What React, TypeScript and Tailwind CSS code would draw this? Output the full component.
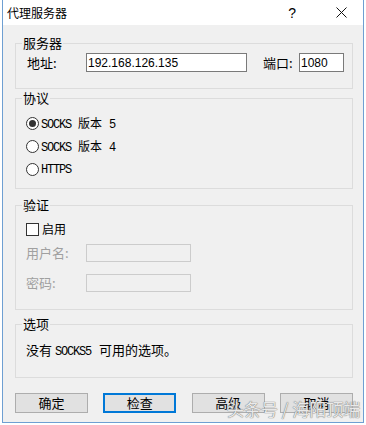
const cjk = "font-['Noto_Sans_CJK_SC','Noto_Sans',sans-serif]";
const mono = "font-['Liberation_Mono',monospace] text-[12px] tracking-[-1.2px]";

const Group = ({
  label,
  className,
  children,
}: {
  label: string;
  className: string;
  children: React.ReactNode;
}) => (
  <div className={`relative border border-[#dcdcdc] ${className}`}>
    <span
      className={`absolute left-[6px] top-[-9px] bg-[#f0f0f0] px-[1px] text-[13px] leading-[16px] text-black ${cjk}`}
    >
      {label}
    </span>
    {children}
  </div>
);

const Radio = ({ checked, children }: { checked?: boolean; children: React.ReactNode }) => (
  <div className="flex h-[23px] items-center">
    <span className="flex h-[13px] w-[13px] items-center justify-center rounded-full border border-[#333333] bg-white">
      {checked && <span className="h-[7px] w-[7px] rounded-full bg-[#333333]" />}
    </span>
    <span className="ml-[2px] flex items-baseline text-[12px] leading-[16px] text-black">{children}</span>
  </div>
);

const Socks = ({ n }: { n: string }) => (
  <>
    <span className={mono}>SOCKS&nbsp;</span>
    <span className={`${cjk} ml-[1px]`}>版本</span>
    <span className={`${mono} ml-[1px]`}>&nbsp;{n}</span>
  </>
);

const Button = ({ label, focused }: { label: string; focused?: boolean }) => (
  <div
    className={`flex h-[20px] w-[73px] items-center justify-center bg-[#e1e1e1] text-[13px] leading-[16px] text-black ${cjk} ${
      focused ? "border-2 border-[#0078d7]" : "border border-[#adadad]"
    }`}
  >
    {label}
  </div>
);

const App = () => {
  return (
    <div className="relative h-[425px] w-[366px] overflow-hidden bg-white">
      <div className="ml-[2px] w-[362px] border-x border-b border-[#6e9fd2]">
        {/* title bar */}
        <div className="flex h-[25px] items-center bg-white pl-[4px]">
          <span className={`text-[12px] leading-[16px] text-black ${cjk}`}>代理服务器</span>
          <span className="ml-auto mr-[40px] font-['Liberation_Sans',sans-serif] text-[14px] leading-[16px] text-black">
            ?
          </span>
          <svg width="11" height="11" viewBox="0 0 11 11" className="mr-[16px]">
            <path d="M0.5 0.5L10.5 10.5M10.5 0.5L0.5 10.5" stroke="#111" strokeWidth="1" />
          </svg>
        </div>

        {/* body */}
        <div className="bg-[#f0f0f0] pb-[9px] pl-[12px] pr-[10px] pt-[18px]">
          <Group label="服务器" className="pb-[16px] pt-[9px]">
            <div className="flex items-center pl-[11px] text-[13px] leading-[16px] text-black">
              <span className={`w-[59px] ${cjk}`}>地址:</span>
              <div className="flex h-[19px] w-[161px] items-center border border-[#7a7a7a] bg-white pl-[1px] font-['Liberation_Sans',sans-serif] text-[12px]">
                192.168.126.135
              </div>
              <span className={`ml-[16px] w-[36px] ${cjk}`}>端口:</span>
              <div className="flex h-[19px] w-[45px] items-center border border-[#7a7a7a] bg-white pl-[1px] font-['Liberation_Sans',sans-serif] text-[12px]">
                1080
              </div>
            </div>
          </Group>

          <Group label="协议" className="mt-[9px] pb-[7px] pl-[10px] pt-[13px]">
            <Radio checked>
              <Socks n="5" />
            </Radio>
            <Radio>
              <Socks n="4" />
            </Radio>
            <Radio>
              <span className={mono}>HTTPS</span>
            </Radio>
          </Group>

          <Group label="验证" className="mt-[16px] pb-[17px] pl-[10px] pt-[13px]">
            <div className="flex h-[20px] items-center">
              <span className="h-[13px] w-[13px] border border-[#333333] bg-white" />
              <span className={`ml-[3px] text-[12px] leading-[16px] text-black ${cjk}`}>启用</span>
            </div>
            <div className="mt-[5px] flex items-center text-[13px] leading-[16px] text-[#a0a0a0]">
              <span className={`w-[60px] ${cjk}`}>用户名:</span>
              <div className="h-[18px] w-[105px] border border-[#cccccc] bg-[#f0f0f0]" />
            </div>
            <div className="mt-[12px] flex items-center text-[13px] leading-[16px] text-[#a0a0a0]">
              <span className={`w-[60px] ${cjk}`}>密码:</span>
              <div className="h-[18px] w-[105px] border border-[#cccccc] bg-[#f0f0f0]" />
            </div>
          </Group>

          <Group label="选项" className="mt-[14px] pb-[17px] pl-[10px] pt-[17px]">
            <div className="flex items-baseline text-[13px] leading-[16px] text-black">
              <span className={cjk}>没有&nbsp;</span>
              <span className={mono}>SOCKS5&nbsp;</span>
              <span className={`${cjk} ml-[2px]`}>可用的选项。</span>
            </div>
          </Group>

          <div className="mt-[15px] flex justify-between">
            <Button label="确定" />
            <Button label="检查" focused />
            <Button label="高级" />
            <Button label="取消" />
          </div>
        </div>
      </div>

      <span
        className={`absolute left-[227px] top-[399px] text-[17px] leading-[20px] text-[#e9e9e9] [text-shadow:0_0_1px_#777,0_0_1px_#777] ${cjk}`}
      >
        头条号 / 海阳顶端
      </span>
    </div>
  );
};

export default App;
